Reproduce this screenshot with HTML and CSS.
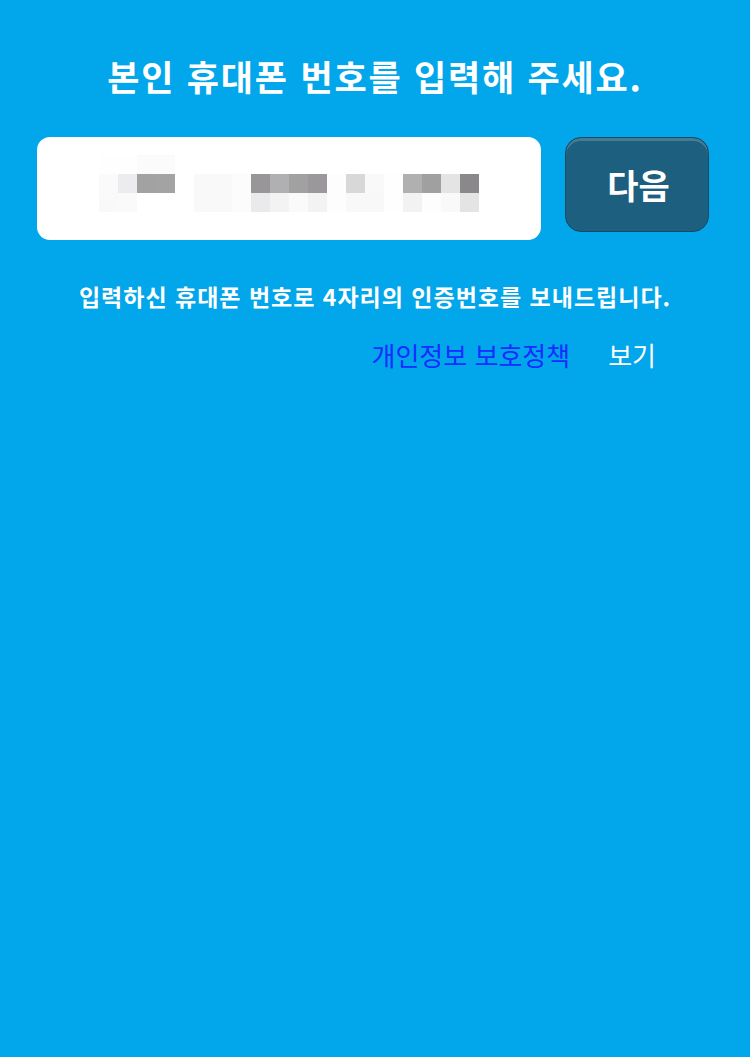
FILE: index.html
```html
<!DOCTYPE html>
<html lang="ko">
<head>
<meta charset="utf-8">
<link rel="stylesheet" href="styles.css">
</head>
<body>
<main class="page">
  <h1 class="title">본인 휴대폰 번호를 입력해 주세요.</h1>
  <div class="form-row">
    <div class="phone-input">
      <div class="pixels">
        <div class="prow">
          <i style="background:#fefefe"></i><i style="background:#fefefe"></i><i style="background:#fbfbfb"></i><i style="background:#fbfbfb"></i><i></i><i></i><i></i><i></i><i></i><i></i><i></i><i></i><i></i><i></i><i></i><i></i><i></i><i></i><i></i><i></i>
        </div>
        <div class="prow">
          <i style="background:#fafafa"></i><i style="background:#ecebed"></i><i style="background:#a3a2a3"></i><i style="background:#a3a3a3"></i><i></i><i style="background:#f9f9f9"></i><i style="background:#f9f9f9"></i><i style="background:#fcfcfc"></i><i style="background:#989699"></i><i style="background:#b0afb1"></i><i style="background:#a1a1a1"></i><i style="background:#9a989b"></i><i style="background:#fdfdfd"></i><i style="background:#d8d8d8"></i><i style="background:#f9f9f9"></i><i style="background:#fefefe"></i><i style="background:#b0b0b0"></i><i style="background:#a0a0a0"></i><i style="background:#e4e4e4"></i><i style="background:#8a888b"></i>
        </div>
        <div class="prow">
          <i style="background:#f9f9f9"></i><i style="background:#fafafa"></i><i></i><i></i><i></i><i style="background:#f9f9f9"></i><i style="background:#f9f9f9"></i><i style="background:#fcfcfc"></i><i style="background:#eae9eb"></i><i style="background:#f3f3f3"></i><i style="background:#fafafa"></i><i style="background:#f3f3f3"></i><i style="background:#fdfdfd"></i><i style="background:#f8f8f8"></i><i style="background:#f8f8f8"></i><i style="background:#fefefe"></i><i style="background:#f2f2f2"></i><i style="background:#fdfdfd"></i><i style="background:#f9f9f9"></i><i style="background:#e4e4e4"></i>
        </div>
      </div>
    </div>
    <button class="next-btn" type="button">다음</button>
  </div>
  <p class="notice">입력하신 휴대폰 번호로 4자리의 인증번호를 보내드립니다.</p>
  <p class="policy"><a class="policy-link" href="#">개인정보 보호정책</a><span class="policy-view">보기</span></p>
</main>
</body>
</html>
```

FILE: styles.css
```css
html, body {
  margin: 0;
  padding: 0;
  background: #02a6ea;
}
body {
  width: 750px;
  height: 1057px;
  font-family: "Noto Sans CJK KR", "Noto Sans", sans-serif;
  color: #ffffff;
}
.page {
  display: flex;
  flex-direction: column;
  padding: 50px 41px 0 37px;
}
.title {
  margin: 0;
  text-align: center;
  font-size: 35px;
  font-weight: 700;
  line-height: 52px;
  padding-left: 4px;
  letter-spacing: 1.8px;
}
.form-row {
  display: flex;
  align-items: flex-start;
  gap: 24px;
  margin-top: 35px;
}
.phone-input {
  width: 504px;
  height: 103px;
  background: #ffffff;
  border-radius: 13px;
  box-sizing: border-box;
  padding: 18px 0 0 62px;
}
.pixels {
  display: flex;
  flex-direction: column;
}
.prow {
  display: flex;
}
.prow i {
  display: block;
  width: 19px;
  height: 19px;
}
.next-btn {
  width: 144px;
  height: 95px;
  box-sizing: border-box;
  border: 1px solid #154a63;
  border-radius: 16px;
  background: #1d5f7e;
  box-shadow: inset 0 3px 0 rgba(255,255,255,0.18);
  color: #ffffff;
  font-family: inherit;
  font-size: 34px;
  font-weight: 700;
  padding: 0 0 0 3px;
}
.notice {
  margin: 40px 0 0;
  text-align: center;
  font-size: 23px;
  font-weight: 700;
  line-height: 32px;
  padding-left: 4px;
  letter-spacing: 1px;
}
.policy {
  margin: 24px 0 0;
  display: flex;
  justify-content: flex-end;
  gap: 38px;
  padding-right: 53px;
  font-size: 26px;
  line-height: 38px;
}
.policy-link {
  color: #1a2cff;
  text-decoration: none;
}
.policy-view {
  color: #ffffff;
}
```
